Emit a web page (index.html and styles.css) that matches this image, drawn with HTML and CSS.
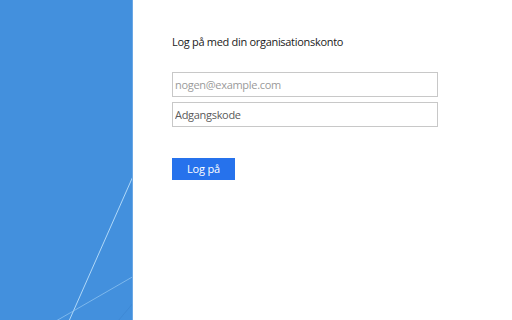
FILE: index.html
```html
<!DOCTYPE html>
<html lang="da">
<head>
<meta charset="utf-8">
<title>Log på</title>
<link rel="stylesheet" href="styles.css">
</head>
<body>
<div class="page">
  <aside class="brand">
    <svg class="brand-art" width="133" height="320" viewBox="0 0 133 320">
      <line x1="134" y1="174" x2="69" y2="321" stroke="#b0d8f8" stroke-width="1"/>
      <line x1="134" y1="276" x2="56" y2="321" stroke="#8cc2f0" stroke-width="0.8"/>
      <line x1="134" y1="302" x2="118" y2="321" stroke="#3d86d2" stroke-width="0.8"/>
      <line x1="132.5" y1="0" x2="132.5" y2="320" stroke="#6aa8e6" stroke-width="1"/>
    </svg>
  </aside>
  <main class="login">
    <h1 class="title">Log på med din organisationskonto</h1>
    <form class="form">
      <input class="field" type="email" placeholder="nogen@example.com">
      <input class="field field-pass" type="password" placeholder="Adgangskode">
      <button class="submit" type="button">Log på</button>
    </form>
  </main>
</div>
</body>
</html>
```

FILE: styles.css
```css
html, body {
  margin: 0;
  padding: 0;
  background: #ffffff;
}
body {
  font-family: "Open Sans", "Liberation Sans", sans-serif;
}
.page {
  display: flex;
  width: 512px;
  height: 320px;
  overflow: hidden;
}
.brand {
  width: 133px;
  flex: none;
  background: #4390dd;
  display: flex;
}
.brand-art {
  display: block;
}
.login {
  flex: 1;
  padding: 34px 0 0 39px;
}
.title {
  margin: 0;
  font-size: 11px;
  font-weight: 400;
  line-height: 16px;
  letter-spacing: -0.3px;
  color: #1a1a1a;
}
.form {
  display: flex;
  flex-direction: column;
  align-items: flex-start;
  margin-top: 22px;
}
.field {
  box-sizing: border-box;
  width: 266px;
  height: 25px;
  margin: 0 0 5px 0;
  padding: 0 2px;
  border: 1px solid #c8c8c8;
  font-family: "Open Sans", "Liberation Sans", sans-serif;
  font-size: 11px;
  letter-spacing: -0.3px;
  color: #333;
  background: #fff;
  outline: none;
}
.field::placeholder {
  color: #9a9a9a;
}
.field-pass::placeholder {
  color: #5a5a5a;
}
.submit {
  margin-top: 26px;
  box-sizing: border-box;
  width: 63px;
  height: 22px;
  padding: 0;
  border: none;
  background: #2672ec;
  color: #ffffff;
  font-family: "Open Sans", "Liberation Sans", sans-serif;
  font-size: 11px;
  letter-spacing: -0.2px;
  line-height: 22px;
}
```
